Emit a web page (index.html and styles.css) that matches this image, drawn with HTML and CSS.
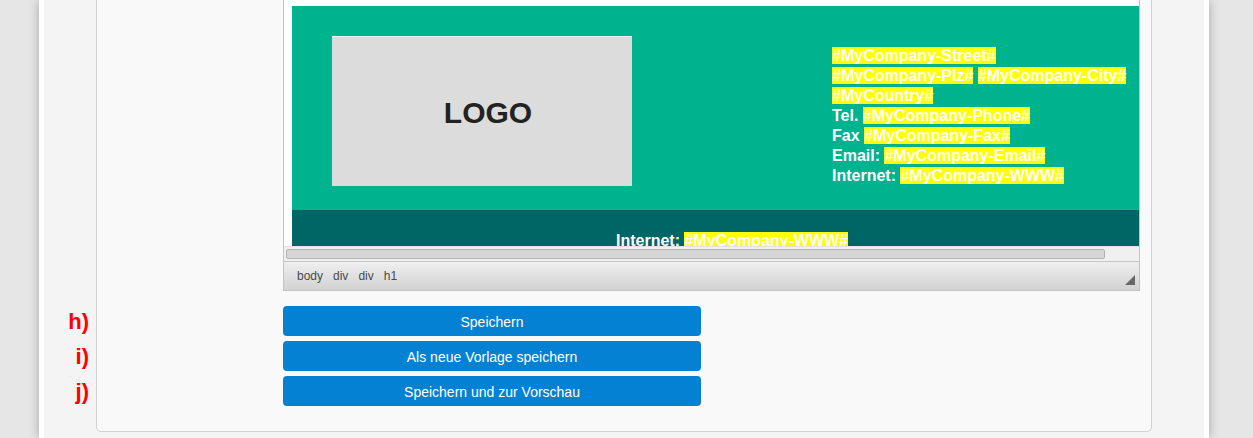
FILE: index.html
```html
<!DOCTYPE html>
<html lang="de">
<head>
  <meta charset="UTF-8">
  <title>Vorlage bearbeiten</title>
  <link rel="stylesheet" href="styles.css">
</head>
<body>
  <div class="page">
    <div class="panel">
      <!-- Editor mit Vorschau der Vorlage -->
      <div class="editor">
        <div class="frame">
          <div class="doc">
            <div class="doc-head">
              <div class="logo">LOGO</div>
              <div class="address">
                <div><span class="ph">#MyCompany-Street#</span></div>
                <div><span class="ph">#MyCompany-Plz#</span> <span class="ph">#MyCompany-City#</span></div>
                <div><span class="ph">#MyCountry#</span></div>
                <div>Tel. <span class="ph">#MyCompany-Phone#</span></div>
                <div>Fax <span class="ph">#MyCompany-Fax#</span></div>
                <div>Email: <span class="ph">#MyCompany-Email#</span></div>
                <div>Internet: <span class="ph">#MyCompany-WWW#</span></div>
              </div>
            </div>
            <div class="doc-foot">
              Internet: <span class="ph">#MyCompany-WWW#</span>
            </div>
          </div>
        </div>
        <div class="hscroll"><div class="thumb"></div></div>
        <div class="statusbar">
          <span class="path">body</span>
          <span class="path">div</span>
          <span class="path">div</span>
          <span class="path">h1</span>
          <span class="grip"></span>
        </div>
      </div>
      <!-- Aktionen -->
      <div class="actions">
        <div class="row"><span class="mark">h)</span><a href="#" class="btn">Speichern</a></div>
        <div class="row"><span class="mark">i)</span><a href="#" class="btn">Als neue Vorlage speichern</a></div>
        <div class="row"><span class="mark">j)</span><a href="#" class="btn">Speichern und zur Vorschau</a></div>
      </div>
    </div>
  </div>
</body>
</html>
```
FILE: styles.css
```css
html,
body {
  height: 100%;
}
body {
  margin: 0;
  overflow: hidden;
  background-color: #e6e6e6;
  font-family: "Liberation Sans", Arial, sans-serif;
}
.page {
  box-sizing: border-box;
  width: 1170px;
  min-height: 100%;
  margin-left: 39px;
  padding: 0 52px;
  border-left: 5px solid #fff;
  border-right: 5px solid #fff;
  background-color: #f4f4f4;
  box-shadow: 0 0 10px rgba(0, 0, 0, 0.28);
}
.panel {
  padding: 0 11px 25px 186px;
  border: 1px solid #d2d2d2;
  border-top: 0;
  border-radius: 0 0 5px 5px;
  background-color: #f9f9f9;
}
.editor {
  border: 1px solid #c4c4c4;
  border-top: 0;
  background-color: #fff;
}
.frame {
  box-sizing: border-box;
  height: 246px;
  padding: 6px 0 0 8px;
  overflow: hidden;
}
.doc {
  width: 880px;
  color: #fff;
  font-weight: bold;
  font-size: 16px;
  line-height: 20px;
}
.doc-head {
  display: flex;
  padding: 30px 40px 24px;
  background-color: #00b38f;
}
.logo {
  box-sizing: border-box;
  width: 300px;
  height: 150px;
  padding: 2px 0 0 12px;
  border-top: 1px solid #f0f0f0;
  background-color: #dcdcdc;
  color: #222;
  font-size: 30px;
  line-height: 148px;
  text-align: center;
}
.address {
  margin: 10px 0 0 200px;
}
.ph {
  background-color: #ffff00;
}
.doc-foot {
  height: 60px;
  padding-top: 21px;
  background-color: #006565;
  text-align: center;
}
.hscroll {
  box-sizing: border-box;
  height: 15px;
  padding: 2px 34px 0 2px;
  background-color: #f0f0f0;
  border-top: 1px solid #e2e2e2;
}
.thumb {
  box-sizing: border-box;
  height: 10px;
  border: 1px solid #b4b4b4;
  border-radius: 2px;
  background-color: #d6d6d6;
}
.statusbar {
  display: flex;
  align-items: center;
  height: 28px;
  padding-left: 13px;
  border-top: 1px solid #c6c6c6;
  background: linear-gradient(#efefef, #d2d2d2);
  font-size: 12px;
  color: #4a4a4a;
}
.path {
  margin-right: 10px;
}
.grip {
  align-self: flex-end;
  width: 0;
  height: 0;
  margin: 0 4px 5px auto;
  border-left: 10px solid transparent;
  border-bottom: 10px solid #666;
}
.actions {
  display: flex;
  flex-direction: column;
  gap: 5px;
  width: 418px;
  margin-top: 15px;
}
.row {
  position: relative;
}
.mark {
  position: absolute;
  top: 0;
  right: calc(100% + 194px);
  color: #f00;
  font-size: 22px;
  font-weight: bold;
  line-height: 32px;
}
.btn {
  display: block;
  height: 30px;
  border-radius: 4px;
  background-color: #0581d3;
  color: #fff;
  font-size: 14px;
  line-height: 32px;
  text-align: center;
  text-decoration: none;
}
```
